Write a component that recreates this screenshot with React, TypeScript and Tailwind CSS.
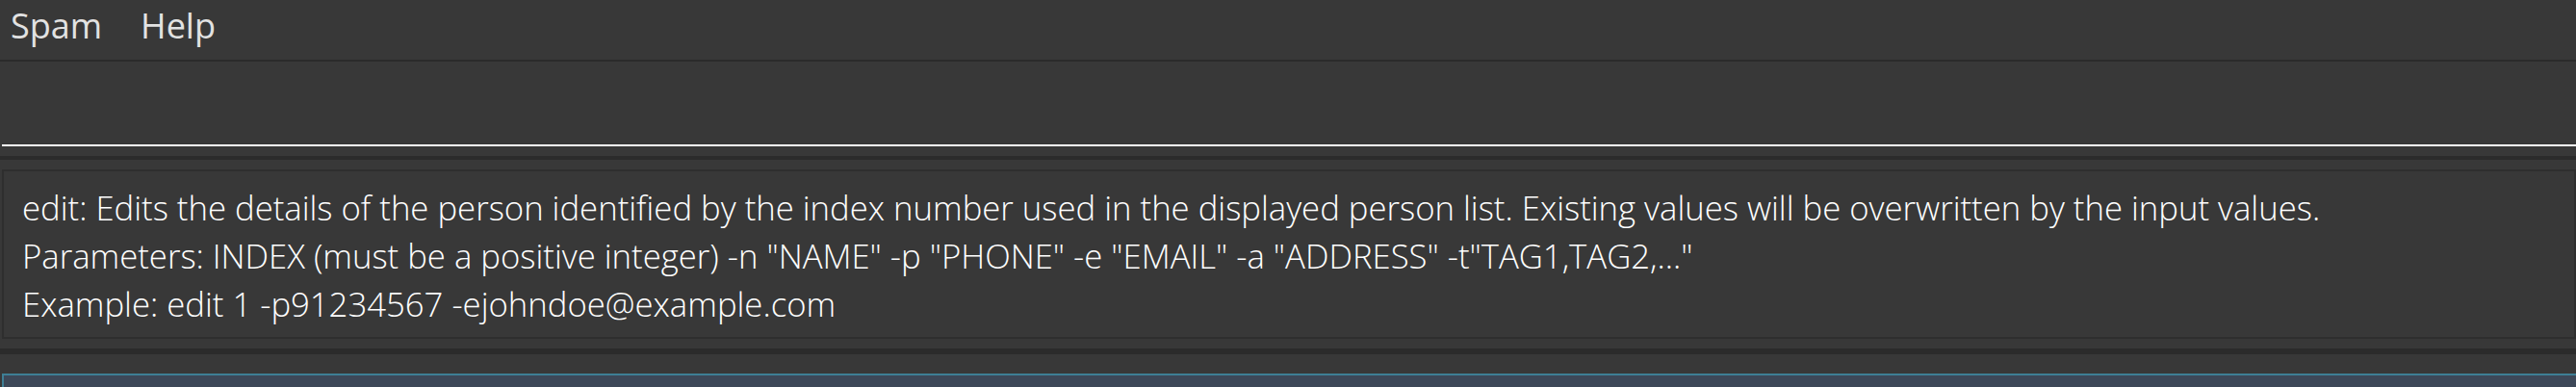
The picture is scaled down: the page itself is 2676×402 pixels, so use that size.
import React from 'react';

const lines = [
  'edit: Edits the details of the person identified by the index number used in the displayed person list. Existing values will be overwritten by the input values.',
  'Parameters: INDEX (must be a positive integer) -n "NAME" -p "PHONE" -e "EMAIL" -a "ADDRESS" -t"TAG1,TAG2,..."',
  'Example: edit 1 -p91234567 -ejohndoe@example.com',
];

const App = () => {
  return (
    <div className="w-[2676px] h-[402px] overflow-hidden bg-[#383838] flex flex-col font-['Open_Sans',sans-serif]">
      {/* Menu bar */}
      <div className="h-[64px] shrink-0 flex items-start gap-[40px] pl-[11px] pt-[2px] border-b-2 border-[#2b2b2b] text-[36px] leading-[1.362] text-[#e2e2e2]">
        <span>Spam</span>
        <span>Help</span>
      </div>

      {/* Command box */}
      <div className="h-[88px] shrink-0 pl-[2px]">
        <div className="h-full border-b-2 border-white"></div>
      </div>

      <div className="h-[10px] shrink-0"></div>
      <div className="h-[4px] shrink-0 bg-[#2b2b2b]"></div>
      <div className="h-[10px] shrink-0"></div>

      {/* Result display */}
      <div className="h-[176px] shrink-0 ml-[2px] border-2 border-[#2e2e2e] pl-[19px] pt-[13px] text-[34.7px] leading-[50px] font-light text-white">
        {lines.map((l) => (
          <div key={l} className="whitespace-nowrap">{l}</div>
        ))}
      </div>

      <div className="h-[10px] shrink-0"></div>
      <div className="h-[6px] shrink-0 bg-[#2b2b2b]"></div>
      <div className="h-[20px] shrink-0"></div>

      {/* Person list panel */}
      <div className="flex-1 ml-[2px] border-t-2 border-l-2 border-[#3e7f95] bg-[#3d4858]"></div>
    </div>
  );
};

export default App;
